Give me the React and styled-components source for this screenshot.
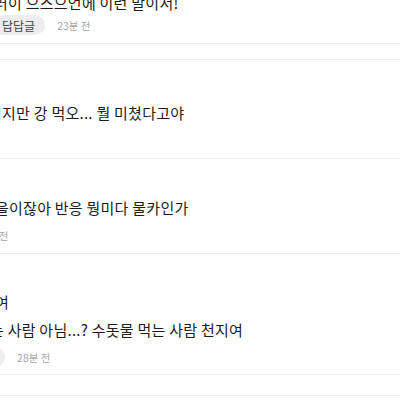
import React from 'react';
import styled, {createGlobalStyle} from 'styled-components';

const Global = createGlobalStyle`
    html, body {
        margin: 0;
        padding: 0;
        background: #fff;
    }
    body {
        font-family: "Noto Sans CJK KR", "Noto Sans", sans-serif;
        color: #1c1c1c;
    }
`;

const Page = styled.div`
    width: 400px;
    height: 400px;
    overflow: hidden;
    background: #fff;
`;

const Comment = styled.div`
    display: flex;
    flex-direction: column;
    align-items: flex-start;
    padding-top: ${props => props.$top || 0}px;
    padding-bottom: ${props => props.$bottom || 0}px;
    margin-top: ${props => props.$pull || 0}px;
    border-bottom: 1px solid #ececec;
`;

const Spacer = styled.div`
    height: ${props => props.$h}px;
    border-bottom: 1px solid #efefef;
`;

// rows are cut by the left edge of the shot, $cut is how much is hidden
const Line = styled.p`
    margin: ${props => props.$gap || 0}px 0 0 ${props => -(props.$cut || 0)}px;
    font-size: 15px;
    line-height: 20px;
    white-space: nowrap;
    color: #1c1c1c;
    letter-spacing: 0.25px;
`;

const Meta = styled.div`
    display: flex;
    align-items: center;
    gap: 12px;
    height: 20px;
    margin: ${props => props.$gap || 0}px 0 0 ${props => -(props.$cut || 0)}px;
`;

const Pill = styled.span`
    display: inline-flex;
    align-items: center;
    height: 20px;
    padding: 0 10px 0 8px;
    border-radius: 10px;
    background: #ededed;
    font-size: 12px;
    color: #444;
    white-space: nowrap;
`;

const Time = styled.span`
    font-size: 10.5px;
    color: #a6a6a6;
    white-space: nowrap;
`;

const App = () => {
    return (
        <Page>
            <Global/>
            <Comment $pull={-7} $bottom={8}>
                <Line $cut={6}>러이 으스으언에 이런 말이서!</Line>
                <Meta $gap={2} $cut={6}>
                    <Pill>답답글</Pill>
                    <Time>23분 전</Time>
                </Meta>
            </Comment>
            <Spacer $h={15}/>
            <Comment $top={43} $bottom={35}>
                <Line $cut={12}>이지만 강 먹오... 뭘 미쳤다고야</Line>
            </Comment>
            <Comment $top={39} $bottom={8}>
                <Line $cut={5}>을이잖아 반응 뭥미다 물카인가</Line>
                <Meta $gap={7} $cut={25}>
                    <Time>25분 전</Time>
                </Meta>
            </Comment>
            <Comment $top={38} $bottom={7}>
                <Line $cut={5}>여</Line>
                <Line $gap={8} $cut={10}>는 사람 아님...? 수돗물 먹는 사람 천지여</Line>
                <Meta $gap={7} $cut={35}>
                    <Pill>답글</Pill>
                    <Time>28분 전</Time>
                </Meta>
            </Comment>
            <Spacer $h={20}/>
        </Page>
    );
};

export default App;
